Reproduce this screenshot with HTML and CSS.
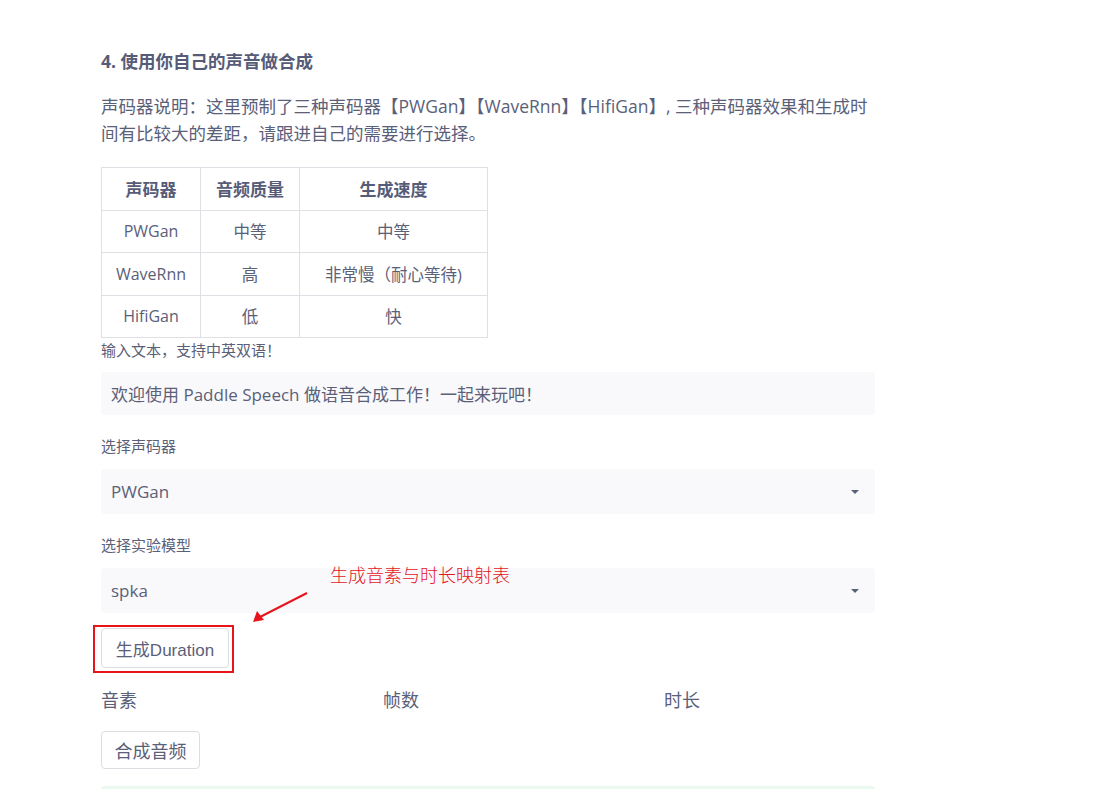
FILE: index.html
```html
<!DOCTYPE html>
<html lang="zh">
<head>
<meta charset="utf-8">
<title>PaddleSpeech</title>
<link rel="stylesheet" href="styles.css">
</head>
<body>
<main class="page">
  <h4 class="title">4. 使用你自己的声音做合成</h4>
  <p class="desc">声码器说明：这里预制了三种声码器【PWGan】【WaveRnn】【HifiGan】, 三种声码器效果和生成时间有比较大的差距，请跟进自己的需要进行选择。</p>
  <table class="vtable">
    <thead>
      <tr><th class="c1">声码器</th><th class="c2">音频质量</th><th class="c3">生成速度</th></tr>
    </thead>
    <tbody>
      <tr><td>PWGan</td><td>中等</td><td>中等</td></tr>
      <tr><td>WaveRnn</td><td>高</td><td>非常慢（耐心等待)</td></tr>
      <tr><td>HifiGan</td><td>低</td><td>快</td></tr>
    </tbody>
  </table>
  <div class="field first">
    <label class="label">输入文本，支持中英双语！</label>
    <div class="input">欢迎使用 Paddle Speech 做语音合成工作！一起来玩吧！</div>
  </div>
  <div class="field">
    <label class="label">选择声码器</label>
    <div class="select"><span>PWGan</span><span class="caret"></span></div>
  </div>
  <div class="field">
    <label class="label">选择实验模型</label>
    <div class="select"><span>spka</span><span class="caret"></span></div>
  </div>
  <div class="btn-row">
    <div class="highlight"><button class="btn">生成Duration</button></div>
    <div class="note">生成音素与时长映射表</div>
    <svg class="arrow" width="70" height="40" viewBox="0 0 70 40">
      <line x1="64" y1="5" x2="17" y2="29" stroke="#e8141c" stroke-width="2"/>
      <polygon points="10,34 14,23 21,32" fill="#e8141c"/>
    </svg>
  </div>
  <div class="cols">
    <div>音素</div><div>帧数</div><div>时长</div>
  </div>
  <div class="btn-row2"><button class="btn">合成音频</button></div>
  <div class="success"></div>
</main>
</body>
</html>
```

FILE: styles.css
```css
html, body {
  margin: 0;
  padding: 0;
  background: #ffffff;
}
body {
  font-family: "Open Sans", "Noto Sans CJK SC", sans-serif;
  color: #5b6079;
  overflow: hidden;
  height: 791px;
}
.page {
  width: 774px;
  margin-left: 101px;
  padding-top: 48px;
}
.title {
  margin: 0;
  font-size: 17.5px;
  font-weight: 700;
  line-height: 26px;
  color: #565c78;
}
.desc {
  margin: 19px 0 0 0;
  font-size: 17.5px;
  line-height: 27px;
  width: 774px;
}
.vtable {
  margin-top: 20px;
  border-collapse: collapse;
  font-size: 16.5px;
}
.vtable th, .vtable td {
  border: 1px solid #dfe0e5;
  text-align: center;
  height: 41.5px;
  padding: 0;
}
.vtable th {
  font-weight: 700;
  font-size: 17px;
  color: #565c78;
}
.vtable td:first-child {
  font-size: 16px;
}
.c1 { width: 98px; }
.c2 { width: 98px; }
.c3 { width: 187px; }
.field {
  margin-top: 21px;
}
.field.first {
  margin-top: 2px;
}
.label {
  display: block;
  font-size: 15px;
  line-height: 20px;
  color: #5b6079;
}
.input, .select {
  margin-top: 13px;
  height: 44px;
  background: #f9f9fb;
  border-radius: 4px;
  display: flex;
  align-items: center;
  padding: 0 10px;
  font-size: 17px;
  color: #5b6079;
}
.field.first .input {
  margin-top: 12px;
  height: 43px;
}
.select {
  height: 45px;
  justify-content: space-between;
  margin-top: 13px;
}
.caret {
  width: 0;
  height: 0;
  border-left: 4px solid transparent;
  border-right: 4px solid transparent;
  border-top: 4px solid #5b6079;
  margin-right: 6px;
}
.btn-row {
  position: relative;
  margin-top: 12px;
  margin-left: -8px;
  height: 48px;
}
.highlight {
  display: inline-block;
  box-sizing: border-box;
  border: 2px solid #e8141c;
  padding: 1px 0 0 6px;
  width: 141px;
  height: 48px;
}
.btn {
  font-family: "Liberation Sans", "Noto Sans CJK SC", sans-serif;
  font-size: 17px;
  color: #5b6079;
  background: #ffffff;
  border: 1px solid #dcdde2;
  border-radius: 4px;
  padding: 0;
  height: 40px;
  white-space: nowrap;
  cursor: pointer;
}
.highlight .btn {
  width: 128px;
}
.note {
  position: absolute;
  left: 237px;
  top: -64px;
  font-family: "Noto Sans CJK SC", sans-serif;
  font-weight: 300;
  color: #e4161d;
  font-size: 18px;
}
.arrow {
  position: absolute;
  left: 150px;
  top: -37px;
}
.cols {
  display: grid;
  grid-template-columns: 282px 281px 1fr;
  margin-top: 12px;
  font-family: "Noto Sans CJK SC", sans-serif;
  font-size: 18px;
  line-height: 28px;
}
.btn-row2 {
  margin-top: 18px;
}
.btn-row2 .btn {
  height: 38px;
  width: 99px;
  font-size: 18px;
}
.success {
  margin-top: 17px;
  height: 3px;
  background: #ebfaf1;
  border-radius: 4px 4px 0 0;
}
```
